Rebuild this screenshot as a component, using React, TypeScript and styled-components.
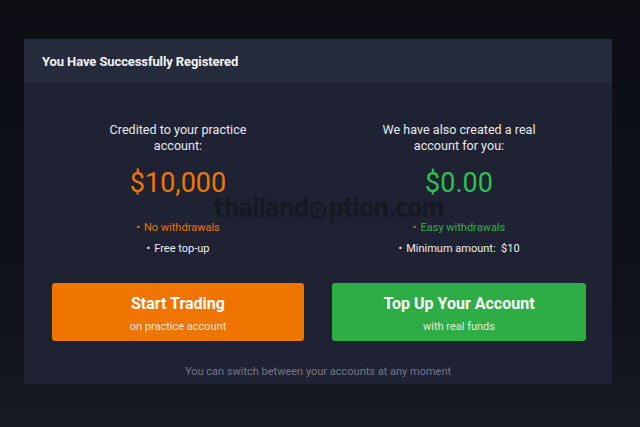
import React from "react";
import styled, { createGlobalStyle } from "styled-components";

const Global = createGlobalStyle`
  html, body { margin: 0; padding: 0; }
  body {
    width: 640px;
    height: 427px;
    overflow: hidden;
    background: #0e1017;
    font-family: Roboto, "Liberation Sans", Arial, sans-serif;
  }
`;

const Page = styled.div`
  width: 640px;
  height: 427px;
  box-sizing: border-box;
  padding: 39px 28px 0 24px;
  background: linear-gradient(180deg, #0c0e14 0%, #0f1118 60%, #151923 100%);
`;

const Modal = styled.div`
  position: relative;
  width: 588px;
  background: #1f2232;
  display: flex;
  flex-direction: column;
`;

const Header = styled.div`
  height: 44px;
  background: #262b3b;
  display: flex;
  align-items: center;
  padding: 0 18px;
  color: #f2f3f6;
  font-size: 13px;
  font-weight: 700;
  letter-spacing: -0.1px;
`;

const Body = styled.div`
  padding: 39px 26px 0 28px;
  display: grid;
  grid-template-columns: 252px 254px;
  column-gap: 28px;
`;

const Column = styled.div`
  display: flex;
  flex-direction: column;
  align-items: center;
  text-align: center;
`;

const Lead = styled.div`
  color: #e6e8ee;
  font-size: 12.6px;
  line-height: 16px;
  width: 170px;
`;

const Amount = styled.div<{ $tone: string }>`
  color: ${(p) => p.$tone};
  font-size: 27px;
  line-height: 34px;
  margin-top: 12px;
  font-weight: 400;
`;

const Points = styled.ul`
  list-style: none;
  margin: 21px 0 0;
  padding: 0;
  display: flex;
  flex-direction: column;
  gap: 8px;
`;

const Point = styled.li<{ $tone: string }>`
  color: ${(p) => p.$tone};
  font-size: 11px;
  line-height: 13px;
  &::before {
    content: "•";
    margin-right: 4px;
  }
`;

const ActionButton = styled.button<{ $bg: string }>`
  grid-row: 2;
  margin-top: 28px;
  height: 58px;
  border: none;
  border-radius: 3px;
  background: ${(p) => p.$bg};
  color: #ffffff;
  display: flex;
  flex-direction: column;
  align-items: center;
  justify-content: center;
  gap: 7px;
  font-family: inherit;
  cursor: pointer;
  padding: 4px 0 0;
`;

const ButtonTitle = styled.span`
  font-size: 16px;
  font-weight: 700;
  line-height: 18px;
`;

const ButtonSub = styled.span`
  font-size: 11px;
  line-height: 13px;
  color: rgba(255, 255, 255, 0.85);
`;

const Footer = styled.div`
  text-align: center;
  color: #737789;
  font-size: 11px;
  line-height: 14px;
  padding: 24px 0 5px;
`;

const Watermark = styled.div`
  position: absolute;
  left: 190px;
  top: 157px;
  display: flex;
  align-items: center;
  color: #151924;
  font-family: "DejaVu Sans Condensed", "DejaVu Sans", sans-serif;
  font-weight: 700;
  font-size: 25px;
  line-height: 26px;
  letter-spacing: -1.3px;
  transform: scaleY(1.05);
  pointer-events: none;
`;

const Logo = () => (
  <svg width="18" height="18" viewBox="0 0 16 16" style={{ margin: "2px 1px 0" }}>
    <circle cx="8" cy="8" r="6.5" fill="none" stroke="#151924" strokeWidth="1.8" />
    <path d="M5 5 L8 8 L11 5 M8 8 V11" fill="none" stroke="#151924" strokeWidth="1.4" />
  </svg>
);

export default function App() {
  return (
    <>
      <Global />
      <Page>
        <Modal>
          <Header>You Have Successfully Registered</Header>
          <Body>
            <Column>
              <Lead>Credited to your practice account:</Lead>
              <Amount $tone="#f07800">$10,000</Amount>
              <Points>
                <Point $tone="#e8770c">No withdrawals</Point>
                <Point $tone="#eceef2">Free top-up</Point>
              </Points>
            </Column>
            <Column>
              <Lead>We have also created a real account for you:</Lead>
              <Amount $tone="#2fc050">$0.00</Amount>
              <Points>
                <Point $tone="#36b04c">Easy withdrawals</Point>
                <Point $tone="#eceef2">Minimum amount:&nbsp; $10</Point>
              </Points>
            </Column>
            <ActionButton $bg="#f07400">
              <ButtonTitle>Start Trading</ButtonTitle>
              <ButtonSub>on practice account</ButtonSub>
            </ActionButton>
            <ActionButton $bg="#2eac45">
              <ButtonTitle>Top Up Your Account</ButtonTitle>
              <ButtonSub>with real funds</ButtonSub>
            </ActionButton>
          </Body>
          <Footer>You can switch between your accounts at any moment</Footer>
          <Watermark>
            thailand
            <Logo />
            ption.com
          </Watermark>
        </Modal>
      </Page>
    </>
  );
}
